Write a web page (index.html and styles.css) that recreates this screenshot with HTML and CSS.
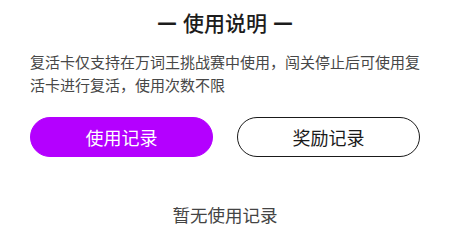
FILE: index.html
```html
<!DOCTYPE html>
<html lang="zh-CN">
<head>
<meta charset="utf-8">
<link rel="stylesheet" href="styles.css">
</head>
<body>
<div class="panel">
  <h2 class="title"><span class="dash">—</span>使用说明<span class="dash">—</span></h2>
  <p class="desc">复活卡仅支持在万词王挑战赛中使用，闯关停止后可使用复活卡进行复活，使用次数不限</p>
  <div class="tabs">
    <div class="tab tab-active">使用记录</div>
    <div class="tab">奖励记录</div>
  </div>
  <p class="empty">暂无使用记录</p>
</div>
</body>
</html>
```
FILE: styles.css
```css
html, body {
  margin: 0;
  padding: 0;
  background: #ffffff;
}
body {
  width: 450px;
  height: 226px;
  overflow: hidden;
  font-family: "Noto Sans CJK SC", "Noto Sans", sans-serif;
}
.panel {
  padding: 0 30px;
}
.title {
  margin: 0;
  padding-top: 8px;
  height: 28px;
  line-height: 28px;
  font-size: 21px;
  font-weight: 500;
  color: #1c1c1c;
  text-align: center;
  display: flex;
  justify-content: center;
  align-items: center;
}
.dash {
  font-family: "DejaVu Sans", sans-serif;
  font-weight: 700;
  font-size: 20px;
  margin: 0 6px;
}
.desc {
  margin: 14px 0 0;
  font-size: 15px;
  line-height: 23px;
  color: #474747;
}
.tabs {
  margin-top: 21px;
  display: flex;
  gap: 24px;
}
.tab {
  flex: 1;
  height: 40px;
  box-sizing: border-box;
  border-radius: 20px;
  border: 1.5px solid #1a1a1a;
  display: flex;
  align-items: center;
  justify-content: center;
  font-size: 18px;
  color: #1a1a1a;
}
.tab-active {
  background: #b400ff;
  border-color: #b400ff;
  color: #ffffff;
}
.empty {
  margin: 46px 0 0;
  text-align: center;
  font-size: 17.5px;
  line-height: 24px;
  color: #444444;
}
```
